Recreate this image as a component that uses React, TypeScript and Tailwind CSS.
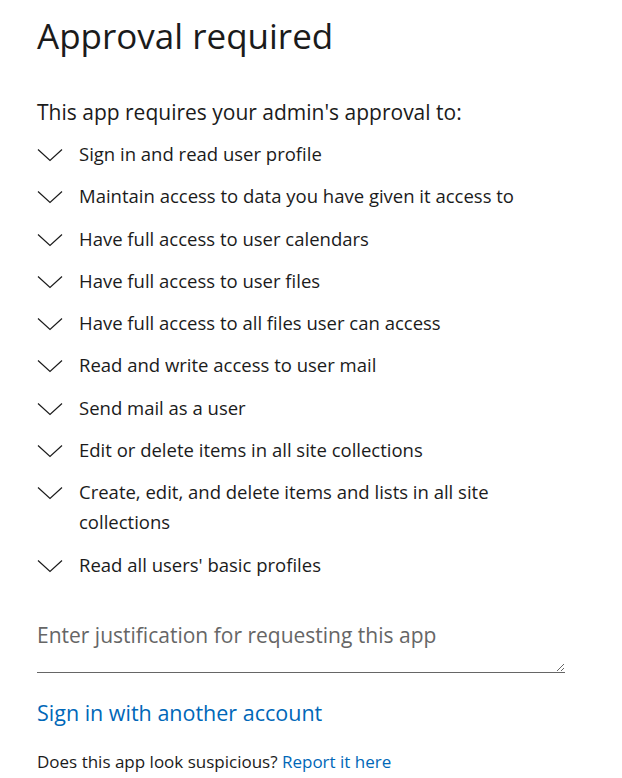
const permissions = [
  'Sign in and read user profile',
  'Maintain access to data you have given it access to',
  'Have full access to user calendars',
  'Have full access to user files',
  'Have full access to all files user can access',
  'Read and write access to user mail',
  'Send mail as a user',
  'Edit or delete items in all site collections',
  'Create, edit, and delete items and lists in all site collections',
  "Read all users' basic profiles",
];

// chevron drawn thin, like the MS login page
const Chevron = () => (
  <svg width="26" height="14" viewBox="0 0 26 14" className="shrink-0 mt-[9px]" fill="none">
    <path d="M1 1.5 L13 12.5 L25 1.5" stroke="#1b1b1b" strokeWidth="1.2" />
  </svg>
);

export default function App() {
  return (
    <div
      className="w-[622px] h-[778px] bg-white pl-[37px] pt-[12px] text-[#1b1b1b] overflow-hidden"
      style={{ fontFamily: '"Segoe UI", "Open Sans", "Noto Sans", sans-serif' }}
    >
      <h1 className="text-[35px] leading-[48px] font-normal">Approval required</h1>

      <p className="mt-[37px] text-[21px] leading-[30px]">This app requires your admin's approval to:</p>

      <ul className="mt-[12px] flex flex-col gap-[12.3px] w-[480px]">
        {permissions.map((p) => (
          <li key={p} className="flex items-start gap-[16px]">
            <Chevron />
            <span className="text-[18.5px] leading-[30px]">{p}</span>
          </li>
        ))}
      </ul>

      <textarea
        className="mt-[32px] block w-[528px] h-[61px] pt-[8px] border-b border-[#666] text-[21px] leading-[30px] placeholder:text-[#666] outline-none resize-y"
        placeholder="Enter justification for requesting this app"
      />

      <a href="#" className="mt-[25px] block text-[21.5px] leading-[30px] text-[#0067b8]">
        Sign in with another account
      </a>

      <p className="mt-[20px] text-[17px] leading-[27px]">
        Does this app look suspicious? <a href="#" className="text-[#0067b8]">Report it here</a>
      </p>
    </div>
  );
}
